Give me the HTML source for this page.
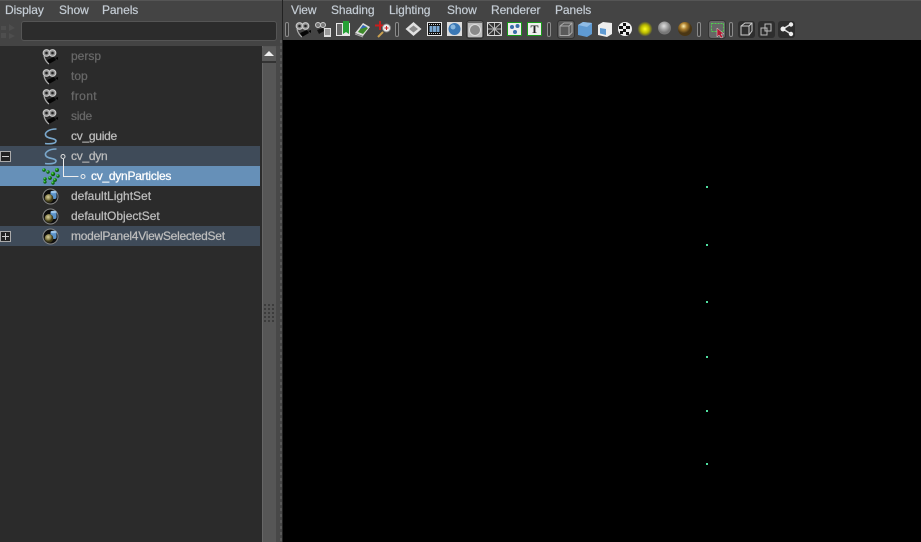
<!DOCTYPE html>
<html><head><meta charset="utf-8"><style>
html,body{margin:0;padding:0;background:#000}
#r{position:relative;width:921px;height:542px;overflow:hidden;background:#444;font-family:"Liberation Sans",sans-serif;font-size:12px}
#r div,#r svg,#r span{position:absolute}
.m{top:3px;color:#c4ccd4;font-size:12px;line-height:14px;white-space:nowrap;letter-spacing:-.08px;-webkit-text-stroke:.2px #c4ccd4}
.t{left:71px;font-size:12px;line-height:14px;white-space:nowrap;color:#bdbdbd;letter-spacing:-.26px;-webkit-text-stroke:.25px #bdbdbd}
.g{color:#686868;-webkit-text-stroke:.25px #686868}
</style></head><body><div id="r">
<div style="left:0;top:0;width:921px;height:1px;background:#555"></div>
<div class="m" style="left:5px">Display</div><div class="m" style="left:59px">Show</div><div class="m" style="left:102px">Panels</div>
<div style="left:21px;top:21px;width:254px;height:18px;background:#2c2c2c;border:1px solid #555;border-radius:3px"></div>
<svg style="left:0;top:23px" width="16" height="18"><path d="M1 3h5v4H1zM9 1l6 4-6 3zM1 10h5v5H1zM9 10l6 3-6 3z" fill="#4e4e4e"/></svg>
<div style="left:0;top:46px;width:262px;height:496px;background:#2b2b2b"></div>
<div style="left:0;top:146px;width:260px;height:20px;background:#3f4b59"></div>
<div style="left:0;top:166px;width:260px;height:20px;background:#6690b8"></div>
<div style="left:0;top:226px;width:260px;height:20px;background:#3f4b59"></div>
<div class="t g" style="top:49px;letter-spacing:0">persp</div><div class="t g" style="top:69px;letter-spacing:0">top</div><div class="t g" style="top:89px;letter-spacing:.4px">front</div><div class="t g" style="top:109px">side</div>
<div class="t" style="top:129px">cv_guide</div><div class="t" style="top:149px">cv_dyn</div>
<div class="t" style="left:91px;top:169px;color:#fff;-webkit-text-stroke:.25px #fff">cv_dynParticles</div>
<div class="t" style="top:189px;letter-spacing:0">defaultLightSet</div><div class="t" style="top:209px;letter-spacing:0">defaultObjectSet</div><div class="t" style="top:229px">modelPanel4ViewSelectedSet</div>
<svg style="left:0;top:46px" width="100" height="200">
<defs>
<radialGradient id="gb" cx=".35" cy=".3"><stop offset="0" stop-color="#7fe07f"/><stop offset=".5" stop-color="#1fa51f"/><stop offset="1" stop-color="#0c5a0c"/></radialGradient>
<radialGradient id="ol" cx=".4" cy=".35"><stop offset="0" stop-color="#d8d0a0"/><stop offset=".6" stop-color="#8f8650"/><stop offset="1" stop-color="#3c3818"/></radialGradient>
<g id="c"><circle cx="4.500" cy="4" r="3.300" fill="#8a8a8a" stroke="#c8c8c8" stroke-width="1.200"/><circle cx="10.500" cy="4" r="3.300" fill="#8a8a8a" stroke="#c8c8c8" stroke-width="1.200"/><circle cx="4.500" cy="4" r="1.300" fill="#222"/><circle cx="10.500" cy="4" r="1.300" fill="#222"/><path d="M5 11l7-3 2 3-7 4z" fill="#050505"/><path d="M13 9l3-1v3z" fill="#050505"/><path d="M2 7q1 5 5 8" fill="none" stroke="#aaa" stroke-width="1.200"/></g>
<g id="s"><circle cx="8" cy="8" r="7.500" fill="#0e0e0e" stroke="#8a8a8a"/><rect x="8" y="2.500" width="6" height="8" rx="2" fill="#5b93c9"/><ellipse cx="11" cy="3.500" rx="3" ry="1.300" fill="#9cc6ea"/><circle cx="6.500" cy="9.800" r="4.300" fill="url(#ol)"/></g>
<path id="sc" d="M56.500 83C48 83 44 87 46 90C48 93 56 92 56 95C56 98 49 98 45 97.500" fill="none" stroke="#7aa8cc" stroke-width="1.600"/>
</defs>
<use href="#c" x="42" y="3"/><use href="#c" x="42" y="23"/><use href="#c" x="42" y="43"/><use href="#c" x="42" y="63"/>
<use href="#sc" y="0"/><use href="#sc" y="20"/>
<circle cx="63" cy="110.500" r="2" fill="#3f4b59" stroke="#ddd"/><path d="M63.500 113v17.500h15" fill="none" stroke="#eee"/><circle cx="83" cy="130.500" r="2" fill="#6690b8" stroke="#eee"/>
<g fill="url(#gb)"><circle cx="44" cy="124" r="1.800"/><circle cx="48" cy="126" r="1.700"/><circle cx="57" cy="124" r="2"/><circle cx="53" cy="128" r="2.200"/><circle cx="58" cy="130" r="1.700"/><circle cx="45" cy="133" r="1.700"/><circle cx="50" cy="132" r="1.900"/><circle cx="55" cy="134" r="1.900"/><circle cx="45" cy="136" r="1.600"/><circle cx="53" cy="137" r="1.700"/></g>
<use href="#s" x="42.500" y="142.500"/><use href="#s" x="42.500" y="162.500"/><use href="#s" x="42.500" y="182.500"/>
<g fill="none" stroke="#ccc"><rect x=".5" y="105.500" width="10" height="10" stroke="#aaa" fill="#222"/><path d="M2 110.500h7"/><rect x=".5" y="185.500" width="10" height="10" stroke="#aaa" fill="#222"/><path d="M2 190.500h7M5.500 187v7"/></g>
</svg>
<div style="left:262px;top:46px;width:14px;height:496px;background:#565656;border-left:1px solid #666;box-sizing:border-box"></div>
<div style="left:262px;top:47px;width:14px;height:14px;background:#5a5a5a;border-bottom:2px solid #333;border-radius:2px 2px 0 0"></div>
<svg style="left:264px;top:51px" width="10" height="6"><path d="M0 5L5 0l5 5z" fill="#eee"/></svg>
<svg style="left:263px;top:303px" width="13" height="20"><g fill="#3c3c3c"><path d="M1 1h2v2H1zM5 1h2v2H5zM9 1h2v2H9zM1 5h2v2H1zM5 5h2v2H5zM9 5h2v2H9zM1 9h2v2H1zM5 9h2v2H5zM9 9h2v2H9zM1 13h2v2H1zM5 13h2v2H5zM9 13h2v2H9zM1 17h2v2H1zM5 17h2v2H5zM9 17h2v2H9z"/></g></svg>
<div style="left:276px;top:46px;width:6px;height:496px;background:#484848"></div>
<div style="left:280px;top:40px;width:2px;height:502px;background:repeating-linear-gradient(#5a5a5a 0 3px,#484848 3px 6px)"></div>
<div style="left:282px;top:0;width:1px;height:542px;background:#222"></div>
<div style="left:283px;top:40px;width:638px;height:502px;background:#000"></div>
<div class="m" style="left:291px">View</div><div class="m" style="left:331px">Shading</div><div class="m" style="left:389px">Lighting</div><div class="m" style="left:447px">Show</div><div class="m" style="left:491px">Renderer</div><div class="m" style="left:555px">Panels</div>
<svg style="left:283px;top:19px" width="540" height="21">
<g fill="#3a3a3a" stroke="#8a8a8a"><rect x="2.500" y="3.500" width="3" height="14" rx="1.500"/><rect x="112.500" y="3.500" width="3" height="14" rx="1.500"/><rect x="264.500" y="3.500" width="3" height="14" rx="1.500"/><rect x="414.500" y="3.500" width="3" height="14" rx="1.500"/><rect x="446.500" y="3.500" width="3" height="14" rx="1.500"/></g>
<use href="#c" x="12" y="3"/>
<g transform="translate(32,3)"><circle cx="3" cy="3" r="2.500" fill="#777" stroke="#ccc"/><circle cx="8" cy="3" r="2.500" fill="#777" stroke="#ccc"/><path d="M2 8l6-2 1 3-5 3z" fill="#111"/><rect x="9" y="6" width="7" height="9" fill="#ddd"/><path d="M10 8h5M10 10h5M10 12h5" stroke="#555"/></g>
<g transform="translate(53,2)"><rect y="2" width="14" height="13" fill="#e8e8e8"/><rect x="1" y="3" width="5" height="11" fill="#666"/><path d="M7 0h6v13l-3-2-3 2z" fill="#25a035"/></g>
<g transform="translate(72,3)"><path d="M0 11L8 1l7 4-7 9z" fill="#ddd"/><path d="M3 10l5-7 5 3-5 6z" fill="#3f8a2a"/><path d="M5 7l3-4 4 2z" fill="#3366bb"/><path d="M0 12l8 3" stroke="#aaa"/></g>
<g transform="translate(92,2)"><path d="M5 0v9M0 4.500h9" stroke="#c81e1e" stroke-width="2"/><circle cx="11.500" cy="7" r="4" fill="#eee" stroke="#888"/><path d="M9.500 7h4M11.500 5v4" stroke="#c22"/><path d="M8 11l-5 5" stroke="#c9a050" stroke-width="2"/></g>
<g transform="translate(123,3)"><path d="M7.500 0l8 7-8 7-8-7z" fill="#e0e0e0"/><path d="M7.500 3.500l4.500 3.500-4.500 3.500L3 7z" fill="#8a8a8a"/></g>
<g transform="translate(144,3)"><rect width="15" height="14" fill="#e8e8e8"/><rect x="1" y="1" width="13" height="12" fill="#111"/><rect x="2.500" y="4" width="3" height="6" fill="#7aa7d0"/><rect x="6" y="4" width="3" height="6" fill="#7aa7d0"/><rect x="9.500" y="4" width="3" height="6" fill="#7aa7d0"/><path d="M2 2.500h11M2 11.500h11" stroke="#ccc" stroke-dasharray="1 1"/></g>
<g transform="translate(164,3)"><rect width="15" height="14" fill="#ddd"/><circle cx="7.500" cy="7" r="6" fill="#3b78b5"/><circle cx="6" cy="5" r="2.500" fill="#8ab8de"/></g>
<rect x="183.500" y="1.500" width="17" height="18" rx="3" fill="#666" stroke="#333"/><rect x="185" y="4" width="14" height="14" fill="#bdbdbd"/><circle cx="192" cy="11" r="5.500" fill="#8a8a8a" stroke="#ddd"/>
<g transform="translate(204,3)"><rect width="15" height="14" fill="#ddd"/><rect x="1" y="1" width="13" height="12" fill="#333"/><path d="M1 1l13 12M14 1L1 13M7.500 1v12M1 7h13" stroke="#bbb"/></g>
<g transform="translate(224,3)"><rect x=".5" y=".5" width="14" height="13" fill="#eee" stroke="#1a9a1a"/><circle cx="5" cy="5" r="2" fill="#3a6ea8"/><circle cx="10.500" cy="4" r="2" fill="#3a6ea8"/><circle cx="8" cy="10" r="2" fill="#3a6ea8"/></g>
<g transform="translate(244,3)"><rect x=".5" y=".5" width="14" height="13" fill="#eee" stroke="#1a9a1a"/><text x="7.500" y="11" font-family="Liberation Serif" font-size="12" font-weight="bold" text-anchor="middle" fill="#222">T</text></g>
<rect x="274.500" y="1.500" width="17" height="18" rx="3" fill="#5a5a5a" stroke="#333"/><path d="M277 7l4-3h8v9.500l-3 3h-9zM277 7h9v9.500M286 7l3-3" fill="none" stroke="#aaa"/>
<path d="M295 6l5-3 9 1v11l-5 3-9-2z" fill="#5f9ad2"/><path d="M295 6l9 2 5-4-9-1z" fill="#8fbce6"/>
<path d="M315 6l5-3 9 1v11l-5 3-9-2z" fill="#eee"/><path d="M317 9l6 1v6l-6-1.500z" fill="#5f9ad2"/>
<circle cx="342" cy="10" r="7" fill="#eee"/><path d="M336 7h4v3h-4zM340 4h3v3h-3zM343 7h4v3h-4zM340 10h3v3h-3zM343 13h3v3h-3zM337 12h3v3h-3z" fill="#111"/>
<defs><radialGradient id="y"><stop offset="0" stop-color="#ffff20"/><stop offset=".55" stop-color="#b8b800"/><stop offset="1" stop-color="#444"/></radialGradient><radialGradient id="h" cx=".45" cy=".35"><stop offset="0" stop-color="#e0e0e0"/><stop offset="1" stop-color="#777"/></radialGradient><radialGradient id="o" cx=".4" cy=".3"><stop offset="0" stop-color="#fff0b0"/><stop offset=".45" stop-color="#b08230"/><stop offset="1" stop-color="#4a3614"/></radialGradient></defs>
<circle cx="362" cy="10" r="7.500" fill="url(#y)"/><circle cx="381.500" cy="9" r="6.500" fill="url(#h)"/><circle cx="402" cy="10" r="7" fill="url(#o)"/>
<rect x="425.500" y="1.500" width="17" height="18" rx="3" fill="#666" stroke="#333"/><rect x="428.500" y="4.500" width="12" height="8" fill="none" stroke="#4fd04f" stroke-dasharray="2 1"/><path d="M434 9v9l2-2 2 3 2-1-2-3h3z" fill="#b01830" stroke="#ddd" stroke-width=".5"/>
<rect x="455" y="2" width="17" height="17" rx="3" fill="#2e2e2e"/><path d="M458 7l4-3h7v8l-3 4h-8zM458 7h8v9M466 7l3-3" fill="none" stroke="#ccc"/>
<rect x="475" y="2" width="17" height="17" rx="3" fill="#2e2e2e"/><path d="M482 5h6v7h-6zM478 9h6v7h-6z" fill="none" stroke="#bbb"/>
<rect x="495" y="2" width="17" height="17" rx="3" fill="#2e2e2e"/><path d="M500 10l8-5M500 10l8 5" stroke="#ddd" stroke-width="1.500"/><circle cx="500" cy="10" r="2.500" fill="#eee"/><circle cx="508" cy="5.500" r="2.200" fill="#eee"/><circle cx="508" cy="15" r="2.200" fill="#eee"/>
</svg>
<div style="left:706px;top:186px;width:2px;height:2px;background:#4fe0a0"></div>
<div style="left:706px;top:244px;width:2px;height:2px;background:#4fe0a0"></div>
<div style="left:706px;top:301px;width:2px;height:2px;background:#4fe0a0"></div>
<div style="left:706px;top:356px;width:2px;height:2px;background:#4fe0a0"></div>
<div style="left:706px;top:410px;width:2px;height:2px;background:#4fe0a0"></div>
<div style="left:706px;top:463px;width:2px;height:2px;background:#4fe0a0"></div>
</div></body></html>
